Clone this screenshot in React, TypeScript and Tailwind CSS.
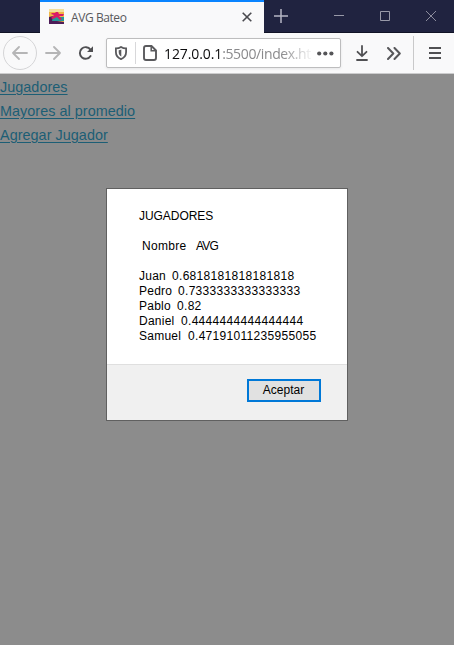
import React from "react";

const players = [
  { name: "Juan", avg: "0.6818181818181818", nameWidth: "w-[33px]" },
  { name: "Pedro", avg: "0.7333333333333333", nameWidth: "w-[39px]" },
  { name: "Pablo", avg: "0.82", nameWidth: "w-[38px]" },
  { name: "Daniel", avg: "0.4444444444444444", nameWidth: "w-[42px]" },
  { name: "Samuel", avg: "0.47191011235955055", nameWidth: "w-[49px]" },
];

const links = ["Jugadores", "Mayores al promedio", "Agregar Jugador"];

function Favicon() {
  return (
    <svg width="15" height="15" viewBox="0 0 15 15" className="block">
      <rect width="15" height="15" fill="#f2b544" />
      <rect width="15" height="3" fill="#f3df9c" />
      <rect y="8" width="15" height="4" fill="#259a98" />
      <path d="M0 8L4 7L3 12L8 12L15 13V15H0Z" fill="#4d1c58" />
      <path d="M3 4H6L7 3H9L10 5H15L14 7H10L13 10L11 11L8 8L4 10L2 9L5 6L2 5Z" fill="#d91b67" />
    </svg>
  );
}

function TabStrip() {
  return (
    <div className="flex h-[33px] bg-[#202340]">
      <div className="w-10 border-b border-[#111326]" />
      <div className="flex w-[224px] border-t-2 border-[#0a84ff] bg-[#f9f9fa] pl-[9px]">
        <div className="pt-[7px]"><Favicon /></div>
        <div className="ml-[7px] w-[171px] pt-[7px] font-['Open_Sans',sans-serif] text-[12px] leading-[18px] tracking-[-0.42px] text-[#58585c]">
          AVG Bateo
        </div>
        <svg width="10" height="10" viewBox="0 0 10 10" className="mt-[10px]" fill="none" stroke="#4a4a4f" strokeWidth="1.6">
          <path d="M.7 .7L9.3 9.3M9.3 .7L.7 9.3" />
        </svg>
      </div>
      <div className="flex flex-1 border-b border-[#111326] pl-[10px]">
        <svg width="14" height="14" viewBox="0 0 14 14" className="mt-[9px]" fill="none" stroke="#b5b6c3" strokeWidth="1.5">
          <path d="M7 0V14M0 7H14" />
        </svg>
        <svg width="10" height="10" viewBox="0 0 10 10" className="mt-[11px] ml-[46px]" stroke="#9899a8">
          <path d="M0 4.5H10" />
        </svg>
        <svg width="10" height="10" viewBox="0 0 10 10" className="mt-[11px] ml-[36px]" fill="none" stroke="#9899a8">
          <path d="M.5 .5H9.5V9.5H.5Z" />
        </svg>
        <svg width="10" height="10" viewBox="0 0 10 10" className="mt-[11px] ml-[36px]" fill="none" stroke="#9899a8" strokeWidth=".9">
          <path d="M0 0L10 10M10 0L0 10" />
        </svg>
      </div>
    </div>
  );
}

function UrlField() {
  return (
    <div className="ml-[12px] flex h-[30px] w-[235px] items-center rounded-[2px] border border-[#bdbdbe] bg-white shadow-[0_1px_3px_rgba(0,0,0,0.08)]">
      <svg width="12" height="14" viewBox="0 0 12 14" className="ml-[8px] shrink-0">
        <path d="M6 .9C7.7 2 9.5 2.3 11.1 2.3V6C11.1 9.8 8.7 12 6 13.1C3.3 12 .9 9.8 .9 6V2.3C2.5 2.3 4.3 2 6 .9Z" fill="none" stroke="#5a5a5d" strokeWidth="1.8" />
        <path d="M6.3 3.6V10.4C4.6 9.6 3.7 8.1 3.7 6V4.2C4.6 4.1 5.5 3.9 6.3 3.6Z" fill="#5a5a5d" />
      </svg>
      <div className="ml-[8px] h-[22px] w-px shrink-0 bg-[#d8d8da]" />
      <svg width="14" height="16" viewBox="0 0 14 16" className="ml-[7px] shrink-0" fill="none" stroke="#5a5a5d" strokeWidth="1.9">
        <path d="M3 1H8.5L13 5.5V13Q13 15 11 15H3Q1 15 1 13V3Q1 1 3 1Z" />
        <path d="M8.2 1V5.8H13" strokeWidth="1.5" />
      </svg>
      <div className="ml-[7px] w-[147px] shrink-0 overflow-hidden whitespace-nowrap pt-[2px] font-['Open_Sans',sans-serif] text-[14px] leading-5 tracking-[-0.37px] text-[#8a8a8c] [mask-image:linear-gradient(to_right,black_118px,transparent_150px)]">
        <span className="tracking-[-0.1px] text-[#0c0c0d]">127.0.0.1</span>:5500/index.html
      </div>
      <svg width="17" height="5" viewBox="0 0 17 5" className="ml-[6px] shrink-0" fill="#555558">
        <circle cx="2.2" cy="2.5" r="2.1" />
        <circle cx="8.3" cy="2.5" r="2.1" />
        <circle cx="14.4" cy="2.5" r="2.1" />
      </svg>
    </div>
  );
}

function NavBar() {
  return (
    <div className="flex h-[41px] items-center border-b border-[#cccccd] bg-[#f9f9fa]">
      <div className="ml-[3px] flex h-[34px] w-[34px] items-center justify-center rounded-full border border-[#d5d5d7]">
        <svg width="16" height="14" viewBox="0 0 16 14" fill="none" stroke="#b5b5b6" strokeWidth="1.8" strokeLinecap="round" strokeLinejoin="round">
          <path d="M15 7H1M7 1L1 7L7 13" />
        </svg>
      </div>
      <svg width="16" height="14" viewBox="0 0 16 14" className="ml-[8px]" fill="none" stroke="#b5b5b6" strokeWidth="1.8" strokeLinecap="round" strokeLinejoin="round">
        <path d="M1 7H15M9 1L15 7L9 13" />
      </svg>
      <svg width="16" height="16" viewBox="0 0 16 16" className="ml-[17px]">
        <path d="M12.6 11A5.8 5.8 0 1 1 12.4 4.6" fill="none" stroke="#505053" strokeWidth="1.9" strokeLinecap="round" />
        <path d="M15 1.2V7H9Z" fill="#505053" />
      </svg>
      <UrlField />
      <svg width="12" height="16" viewBox="0 0 12 16" className="ml-[15px]" fill="none" stroke="#505053" strokeWidth="1.8" strokeLinecap="round" strokeLinejoin="round">
        <path d="M6 1V11M1.5 6.8L6 11.2L10.5 6.8M1 15H11" />
      </svg>
      <svg width="14" height="13" viewBox="0 0 14 13" className="ml-[19px]" fill="none" stroke="#57575a" strokeWidth="2" strokeLinecap="round" strokeLinejoin="round">
        <path d="M1 1L6.3 6.5L1 12M7.5 1L12.8 6.5L7.5 12" />
      </svg>
      <div className="ml-[12px] h-[34px] w-px bg-[#c9c9ca]" />
      <svg width="12" height="12" viewBox="0 0 12 12" className="ml-[15px]" stroke="#505053" strokeWidth="2">
        <path d="M0 1H12M0 6H12M0 11H12" />
      </svg>
    </div>
  );
}

function AlertDialog() {
  return (
    <div className="mx-auto mt-[41px] w-[242px] border border-[#606060] bg-white font-['Liberation_Sans',Arial,sans-serif] text-[12px] leading-[15px] text-black">
      <div className="h-[175px] whitespace-pre pt-[20px] pl-8">
        <div className="tracking-[-0.05px]">JUGADORES</div>
        <div className="mt-[15px] flex pl-[3px]">
          <div className="w-[54px] tracking-[0.3px]">Nombre</div>
          <div className="tracking-[-0.8px]">AVG</div>
        </div>
        <div className="mt-[15px]">
          {players.map((player) => (
            <div key={player.name} className="flex">
              <div className={`${player.nameWidth} tracking-[0.25px]`}>{player.name}</div>
              <div className="tracking-[0.31px]">{player.avg}</div>
            </div>
          ))}
        </div>
      </div>
      <div className="flex h-14 justify-end border-t border-[#dfdfdf] bg-[#f0f0f0] pt-[14px] pr-[26px]">
        <button className="flex h-[23px] w-[74px] justify-center border-2 border-[#0078d7] bg-[#e1e1e1] pr-px text-[12px] leading-[18px]">Aceptar</button>
      </div>
    </div>
  );
}

export default function App() {
  return (
    <div className="flex h-[645px] w-[454px] flex-col overflow-hidden bg-[#8c8c8c]">
      <TabStrip />
      <NavBar />
      <main className="flex-1">
        <nav className="flex flex-col items-start pt-px font-['Liberation_Sans',Arial,sans-serif] text-[14.4px] leading-6 tracking-[0.04px] text-[#1c5e75]">
          {links.map((label) => (
            <a key={label} href="#" className="underline underline-offset-2">{label}</a>
          ))}
        </nav>
        <AlertDialog />
      </main>
    </div>
  );
}
